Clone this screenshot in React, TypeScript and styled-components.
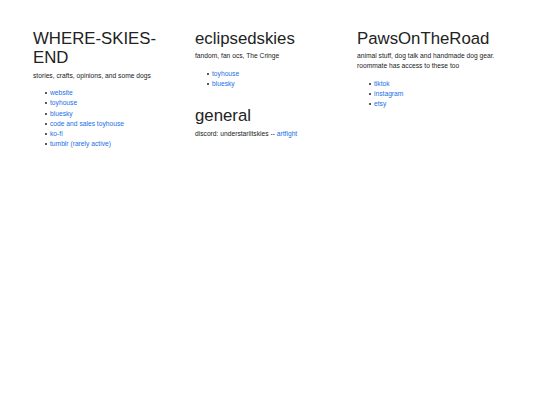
import React from "react";
import styled, { createGlobalStyle } from "styled-components";

interface Link { label: string; href: string; }

interface Section
{
    title: string;
    blurb: React.ReactNode;
    links?: Link[];
}

const columns: Section[][] = [
    [
        {
            title: "WHERE-SKIES-END",
            blurb: "stories, crafts, opinions, and some dogs",
            links: [
                { label: "website", href: "#" },
                { label: "toyhouse", href: "#" },
                { label: "bluesky", href: "#" },
                { label: "code and sales toyhouse", href: "#" },
                { label: "ko-fi", href: "#" },
                { label: "tumblr (rarely active)", href: "#" },
            ],
        },
    ],
    [
        {
            title: "eclipsedskies",
            blurb: "fandom, fan ocs, The Cringe",
            links: [
                { label: "toyhouse", href: "#" },
                { label: "bluesky", href: "#" },
            ],
        },
        {
            title: "general",
            blurb: <>discord: understarlitskies -- <a href="#">artfight</a></>,
        },
    ],
    [
        {
            title: "PawsOnTheRoad",
            blurb: "animal stuff, dog talk and handmade dog gear. roommate has access to these too",
            links: [
                { label: "tiktok", href: "#" },
                { label: "instagram", href: "#" },
                { label: "etsy", href: "#" },
            ],
        },
    ],
];

const App = function LinkDirectory ()
{
    return (
        <>
            <Global/>
            <Page>
                {columns.map((sections, i) => (
                    <Column key={i}>
                        {sections.map((section) => (
                            <Block key={section.title}>
                                <Heading>{section.title}</Heading>
                                <Blurb>{section.blurb}</Blurb>
                                {section.links && (
                                    <LinkList>
                                        {section.links.map((link) => (
                                            <Item key={link.label}>
                                                <a href={link.href}>{link.label}</a>
                                            </Item>
                                        ))}
                                    </LinkList>
                                )}
                            </Block>
                        ))}
                    </Column>
                ))}
            </Page>
        </>
    );
};

const Global = createGlobalStyle`
    html, body {
        margin: 0;
        padding: 0;
        background: #fff;
    }
    body {
        font-family: "Liberation Sans", Arial, sans-serif;
        color: #222;
    }
    a {
        color: #1a6fe6;
        text-decoration: none;
    }
`;

const Page = styled.main`
    display: grid;
    grid-template-columns: repeat(3, 146px);
    column-gap: 16px;
    padding: 28.5px 0 0 33px;
`;

const Column = styled.section`
    display: flex;
    flex-direction: column;
    gap: 10px;
`;

const Block = styled.div`
    display: flex;
    flex-direction: column;
`;

const Heading = styled.h1`
    margin: 0 0 3.5px;
    font-size: 16.8px;
    line-height: 19.3px;
    font-weight: 400;
    color: #222;
`;

const Blurb = styled.p`
    margin: 0;
    font-size: 6.7px;
    line-height: 10px;
`;

const LinkList = styled.ul`
    margin: 7.5px 0 7px;
    padding-left: 12px;
    list-style: none;
    font-size: 6.7px;
    line-height: 10.2px;
`;

/* small square-ish disc sitting just left of each link */
const Item = styled.li`
    display: flex;
    align-items: center;

    &::before {
        content: "";
        width: 2px;
        height: 2px;
        border-radius: 50%;
        background: #222;
        margin-right: 3px;
        flex: none;
    }
`;

export default App;
